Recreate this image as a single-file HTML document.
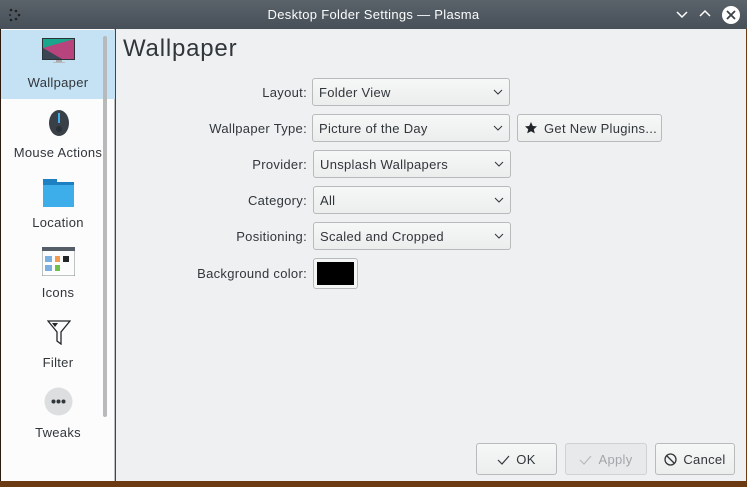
<!DOCTYPE html>
<html><head><style>
*{margin:0;padding:0;box-sizing:border-box}
body{width:747px;height:487px;overflow:hidden;background:#6b3a12;font-family:"Liberation Sans","DejaVu Sans",sans-serif;font-size:13px;color:#31363b;position:relative;letter-spacing:0.3px}
.title{position:absolute;left:0;top:0;width:747px;height:29px;background:linear-gradient(#5a626a,#475058);color:#fcfcfc;text-align:center;line-height:29px;font-size:13px}
.side{position:absolute;left:1px;top:29px;width:114px;height:452px;background:#fcfcfc;border-right:1px solid #bcbebf}
.main{position:absolute;left:116px;top:29px;width:630px;height:452px;background:#eff0f1}
.sel{position:absolute;left:0;top:1px;width:114px;height:69px;background:#c4e2f4}
.lbl{position:absolute;width:114px;text-align:center;font-size:13px}
.sb{position:absolute;left:102px;top:7px;width:4px;height:381px;background:#b8b9ba;border-radius:2px}
.h1{position:absolute;left:7px;top:6px;font-size:24px;color:#31363b;letter-spacing:0.8px}
.fl{position:absolute;right:439px;text-align:right;font-size:13px}
.cb{position:absolute;height:28px;border:1px solid #b8babc;border-radius:3px;background:linear-gradient(#f6f7f7,#eceded);padding-left:6px;line-height:27px;font-size:13px}
.cb svg{position:absolute;right:6px;top:10px}
.btn{position:absolute;height:32px;border:1px solid #b8babc;border-radius:3px;background:linear-gradient(#f6f7f7,#eceded);text-align:center;line-height:31px;font-size:13px}
</style></head><body>
<div style="position:absolute;left:0;top:29px;width:1px;height:452px;background:#2a1a10"></div>
<div class="title">Desktop Folder Settings — Plasma
<svg style="position:absolute;left:8px;top:8px" width="14" height="14"><circle cx="3" cy="2" r="1.3" fill="#222"/><circle cx="8" cy="3" r="1.3" fill="#222"/><circle cx="11" cy="7" r="1.3" fill="#222"/><circle cx="8" cy="11" r="1.3" fill="#222"/><circle cx="3" cy="12" r="1.3" fill="#222"/><circle cx="2" cy="7" r="1" fill="#222"/></svg>
<svg style="position:absolute;left:676px;top:9px" width="12" height="10"><path d="M1 3l5 5 5-5" stroke="#fff" stroke-width="1.5" fill="none"/></svg>
<svg style="position:absolute;left:699px;top:9px" width="12" height="10"><path d="M1 7l5-5 5 5" stroke="#fff" stroke-width="1.5" fill="none"/></svg>
<svg style="position:absolute;left:721px;top:5px" width="20" height="20"><circle cx="10" cy="10" r="9" fill="#fff"/><path d="M6 6l8 8M14 6l-8 8" stroke="#3b4148" stroke-width="1.8"/></svg>
</div>
<div class="side">
<div class="sel"></div>
<svg style="position:absolute;left:41px;top:9px" width="33" height="26"><rect x="0" y="0" width="33" height="22" fill="#2c3136"/><polygon points="1,1 32,1 32,21 1,21" fill="#1aa58d"/><polygon points="1,10 32,1 32,21 1,21" fill="#b8447e"/><polygon points="1,10 20,21 1,21" fill="#3b4654"/><rect x="14" y="22" width="6" height="2" fill="#aaa"/><rect x="11" y="24" width="12" height="1" fill="#bbb"/></svg>
<div class="lbl" style="top:46px">Wallpaper</div>
<svg style="position:absolute;left:47px;top:78px" width="22" height="30"><ellipse cx="11" cy="16" rx="10" ry="13" fill="#3a4048"/><rect x="10" y="6" width="2" height="10" fill="#3daee9"/><circle cx="11" cy="22" r="3" fill="#2a3038"/></svg>
<div class="lbl" style="top:116px">Mouse Actions</div>
<svg style="position:absolute;left:42px;top:150px" width="31" height="28"><rect x="0" y="0" width="14" height="4" fill="#1d80c2"/><rect x="0" y="3" width="31" height="7" fill="#1d80c2"/><rect x="0" y="6" width="31" height="22" fill="#3daee9"/></svg>
<div class="lbl" style="top:186px">Location</div>
<svg style="position:absolute;left:41px;top:218px" width="33" height="29"><rect width="33" height="29" fill="#fcfcfc" stroke="#7f8c8d"/><rect width="33" height="4" fill="#555e66"/><rect x="3" y="9" width="7" height="6" fill="#7ab0e0"/><rect x="13" y="9" width="5" height="6" fill="#f39b50"/><rect x="21" y="9" width="6" height="6" fill="#232629"/><rect x="3" y="18" width="7" height="6" fill="#7ab0e0"/><rect x="13" y="18" width="5" height="6" fill="#6cc24a"/></svg>
<div class="lbl" style="top:256px">Icons</div>
<svg style="position:absolute;left:46px;top:291px" width="24" height="25"><path d="M1 1h22l-9 11v12l-4-3v-9z" fill="none" stroke="#232629" stroke-width="1.3"/><path d="M5 3h6l-3 4z" fill="#232629"/></svg>
<div class="lbl" style="top:326px">Filter</div>
<svg style="position:absolute;left:43px;top:358px" width="29" height="29"><circle cx="14.5" cy="14.5" r="14" fill="#dcdee0"/><circle cx="9.5" cy="14.5" r="2" fill="#31363b"/><circle cx="14.5" cy="14.5" r="2" fill="#31363b"/><circle cx="19.5" cy="14.5" r="2" fill="#31363b"/></svg>
<div class="lbl" style="top:396px">Tweaks</div>
<div class="sb"></div>
</div>
<div class="main">
<div class="h1">Wallpaper</div>
<div class="fl" style="top:56px">Layout:</div>
<div class="fl" style="top:92px">Wallpaper Type:</div>
<div class="fl" style="top:128px">Provider:</div>
<div class="fl" style="top:164px">Category:</div>
<div class="fl" style="top:200px">Positioning:</div>
<div class="fl" style="top:237px">Background color:</div>
<div class="cb" style="left:196px;top:49px;width:198px">Folder View<svg width="10" height="7"><path d="M1 1l4 4 4-4" stroke="#31363b" fill="none"/></svg></div>
<div class="cb" style="left:196px;top:85px;width:198px">Picture of the Day<svg width="10" height="7"><path d="M1 1l4 4 4-4" stroke="#31363b" fill="none"/></svg></div>
<div class="cb" style="left:197px;top:121px;width:198px">Unsplash Wallpapers<svg width="10" height="7"><path d="M1 1l4 4 4-4" stroke="#31363b" fill="none"/></svg></div>
<div class="cb" style="left:197px;top:157px;width:198px">All<svg width="10" height="7"><path d="M1 1l4 4 4-4" stroke="#31363b" fill="none"/></svg></div>
<div class="cb" style="left:197px;top:193px;width:198px">Scaled and Cropped<svg width="10" height="7"><path d="M1 1l4 4 4-4" stroke="#31363b" fill="none"/></svg></div>
<div class="cb" style="left:401px;top:85px;width:145px;padding-left:26px">Get New Plugins...<svg style="left:7px;top:7px;right:auto" width="12" height="12"><path d="M6 0l1.8 4 4.2.4-3.2 2.8 1 4.2L6 9.2 2.2 11.4l1-4.2L0 4.4 4.2 4z" fill="#232629"/></svg></div>
<div style="position:absolute;left:197px;top:229px;width:45px;height:31px;border:1px solid #b8babc;border-radius:3px;background:#f4f5f5;padding:3px"><div style="width:37px;height:23px;background:#000"></div></div>
<div class="btn" style="left:360px;top:414px;width:81px"><svg width="13" height="10" style="vertical-align:-1px;margin-right:6px"><path d="M1 5l4 4 7-8" stroke="#31363b" fill="none" stroke-width="1.2"/></svg>OK</div>
<div class="btn" style="left:449px;top:414px;width:82px;color:#a3a6a9;background:#e8e9ea;border-color:#cfd1d2"><svg width="13" height="10" style="vertical-align:-1px;margin-right:6px"><path d="M1 5l4 4 7-8" stroke="#b8babc" fill="none" stroke-width="1.2"/></svg>Apply</div>
<div class="btn" style="left:539px;top:414px;width:80px"><svg width="13" height="13" style="vertical-align:-2px;margin-right:6px"><circle cx="6.5" cy="6.5" r="5.5" stroke="#31363b" fill="none" stroke-width="1.3"/><path d="M3 3l7 7" stroke="#31363b" stroke-width="1.3"/></svg>Cancel</div>
</div>
</body></html>
